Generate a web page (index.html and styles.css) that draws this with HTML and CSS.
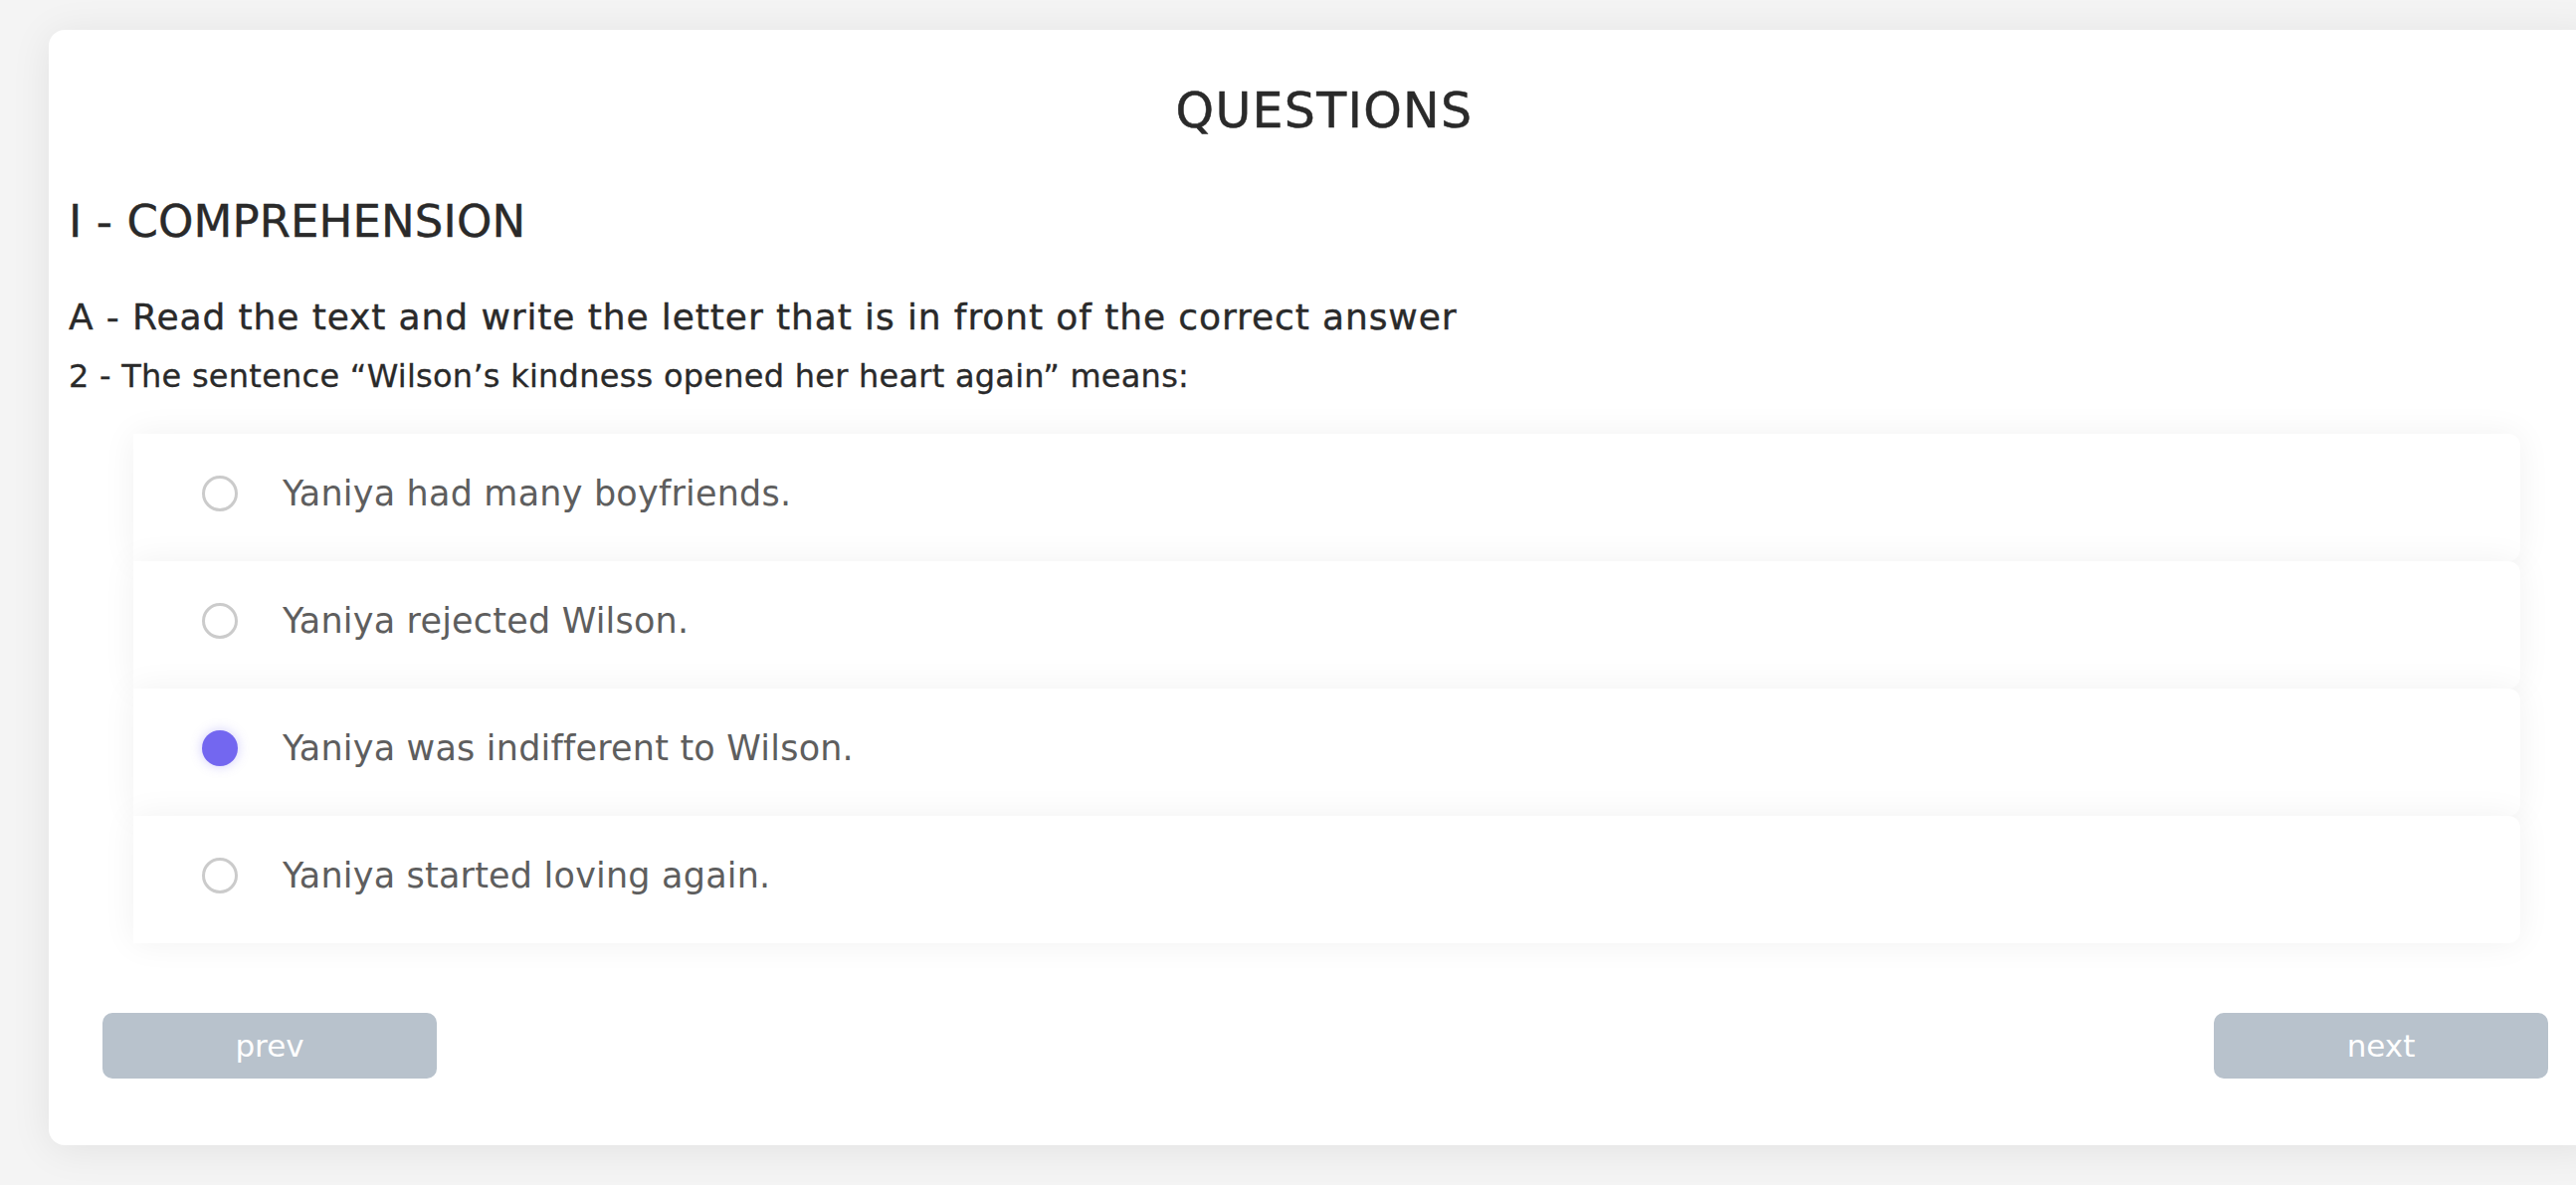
FILE: index.html
```html
<!DOCTYPE html>
<html lang="en">
<head>
<meta charset="utf-8">
<title>Questions</title>
<link rel="stylesheet" href="styles.css">
</head>
<body>
<main class="card">
  <h1 class="title">QUESTIONS</h1>
  <h2 class="section">I - COMPREHENSION</h2>
  <h3 class="instruction">A - Read the text and write the letter that is in front of the correct answer</h3>
  <p class="question">2 - The sentence “Wilson’s kindness opened her heart again” means:</p>
  <div class="options">
    <label class="option"><span class="radio"></span><span class="option-text">Yaniya had many boyfriends.</span></label>
    <label class="option"><span class="radio"></span><span class="option-text">Yaniya rejected Wilson.</span></label>
    <label class="option"><span class="radio radio-checked"></span><span class="option-text">Yaniya was indifferent to Wilson.</span></label>
    <label class="option"><span class="radio"></span><span class="option-text">Yaniya started loving again.</span></label>
  </div>
  <div class="nav">
    <button class="btn">prev</button>
    <button class="btn">next</button>
  </div>
</main>
</body>
</html>
```
FILE: styles.css
```css
html, body {
  margin: 0;
  padding: 0;
}
body {
  background: #f4f4f4;
  font-family: "DejaVu Sans", "Liberation Sans", sans-serif;
  overflow: hidden;
  width: 2589px;
  height: 1191px;
  padding-top: 30px;
  box-sizing: border-box;
}
.card {
  margin-left: 49px;
  width: 2564px;
  box-sizing: border-box;
  background: #ffffff;
  border-radius: 16px;
  box-shadow: 0 4px 40px rgba(0, 0, 0, 0.08);
  padding: 53px 0 67px 0;
  color: #2a2a2a;
}
.title {
  margin: 0;
  font-size: 49px;
  font-weight: normal;
  line-height: 1.2;
  text-align: center;
  letter-spacing: 1.3px;
  -webkit-text-stroke: 0.5px #2a2a2a;
}
.section {
  margin: 54px 0 0 20px;
  font-size: 45px;
  font-weight: normal;
  line-height: 1.2;
  letter-spacing: 0.1px;
  -webkit-text-stroke: 0.4px #2a2a2a;
}
.instruction {
  margin: 47px 0 0 20px;
  font-size: 36px;
  font-weight: normal;
  line-height: 1.2;
  letter-spacing: 0.9px;
  -webkit-text-stroke: 0.4px #2a2a2a;
}
.question {
  margin: 19px 0 0 20px;
  font-size: 32px;
  line-height: 1.2;
  letter-spacing: 0.25px;
  -webkit-text-stroke: 0.3px #2a2a2a;
}
.options {
  margin: 39px 80px 0 85px;
  display: flex;
  flex-direction: column;
}
.option {
  height: 128px;
  box-sizing: border-box;
  padding: 0 0 8px 69px;
  display: flex;
  align-items: center;
  background: #ffffff;
  border-radius: 0 12px 12px 0;
  box-shadow: 0 0 34px rgba(0, 0, 0, 0.06);
}
.radio {
  width: 36px;
  height: 36px;
  box-sizing: border-box;
  border: 3px solid #cbcbcb;
  border-radius: 50%;
  flex: none;
}
.radio-checked {
  border: none;
  background: #7367f0;
  box-shadow: 0 0 12px rgba(115, 103, 240, 0.35);
}
.option-text {
  margin-left: 45px;
  font-size: 35px;
  line-height: 1.2;
  letter-spacing: 0.2px;
  color: #5e5e5e;
}
.nav {
  margin-top: 70px;
  padding: 0 52px 0 54px;
  display: flex;
  justify-content: space-between;
}
.btn {
  width: 336px;
  height: 66px;
  border: none;
  border-radius: 10px;
  background: #b8c2cc;
  color: #ffffff;
  font-family: "DejaVu Sans", "Liberation Sans", sans-serif;
  font-size: 31px;
  padding: 0;
}
```
